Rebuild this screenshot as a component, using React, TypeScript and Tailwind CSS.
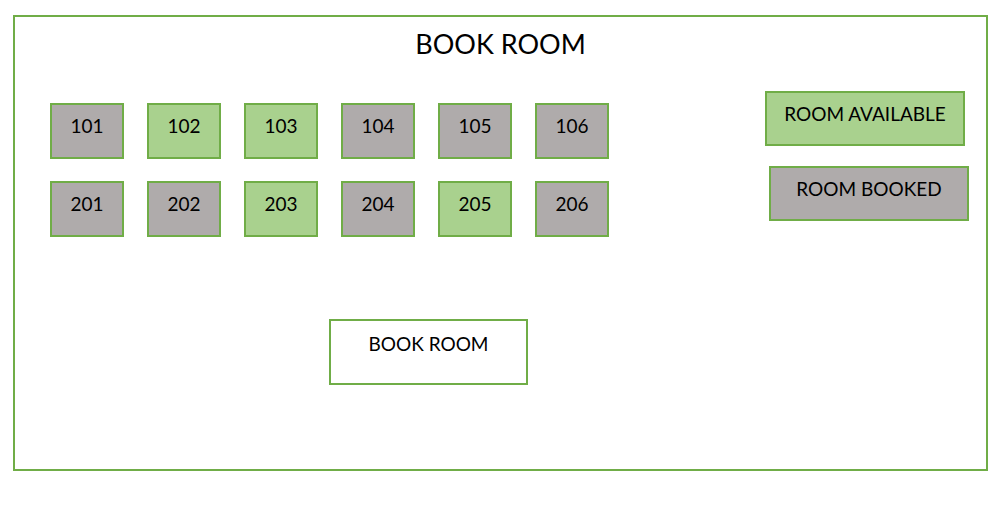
import { useState } from "react";
import clsx from "clsx";

type Room = { number: number; available: boolean };

const rooms: Room[] = [
  { number: 101, available: false },
  { number: 102, available: true },
  { number: 103, available: true },
  { number: 104, available: false },
  { number: 105, available: false },
  { number: 106, available: false },
  { number: 201, available: false },
  { number: 202, available: false },
  { number: 203, available: true },
  { number: 204, available: false },
  { number: 205, available: true },
  { number: 206, available: false },
];

const box = "flex items-start justify-center border-2 border-[#70ad47] text-[19px] leading-6 text-black";
const availableFill = "bg-[#a9d18e]";
const bookedFill = "bg-[#afabab]";

export default function App() {
  const [selected, setSelected] = useState<number | null>(null);

  return (
    <div className="min-h-screen bg-white pt-[15px] pr-[15px] pb-[46px] pl-[13px] font-['Lato',sans-serif] text-black">
      <main className="border-2 border-[#70ad47] pb-[84px]">
        <h1 className="pt-[7px] text-center text-[27px] leading-10">BOOK ROOM</h1>

        <div className="mt-[27px] flex items-start justify-between gap-6 pr-[17px] pl-[35px]">
          <div className="mt-3 grid grid-cols-6 gap-x-[23px] gap-y-[22px]">
            {rooms.map((room) => (
              <button
                key={room.number}
                type="button"
                disabled={!room.available}
                aria-pressed={selected === room.number}
                onClick={() => setSelected(room.number)}
                className={clsx(box, "h-14 w-[74px] pt-[9px]", room.available ? availableFill : bookedFill)}
              >
                {room.number}
              </button>
            ))}
          </div>

          <ul className="flex w-[204px] flex-col gap-5">
            <li className={clsx(box, availableFill, "h-[55px] w-[200px] self-start pt-[9px]")}>ROOM AVAILABLE</li>
            <li className={clsx(box, bookedFill, "h-[55px] w-[200px] self-end pt-[9px]")}>ROOM BOOKED</li>
          </ul>
        </div>

        <button type="button" className={clsx(box, "mt-[82px] ml-[314px] h-[66px] w-[199px] bg-white pt-[11px]")}>
          BOOK ROOM
        </button>
      </main>
    </div>
  );
}
